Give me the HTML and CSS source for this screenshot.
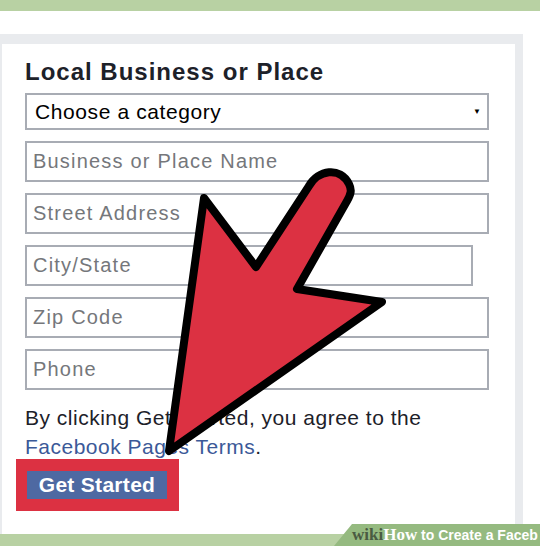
FILE: index.html
```html
<!DOCTYPE html>
<html>
<head>
<meta charset="utf-8">
<link rel="stylesheet" href="styles.css">
</head>
<body>
<div class="page">
  <div class="topbar"></div>
  <div class="spacer"></div>
  <div class="panel">
    <h1 class="title">Local Business or Place</h1>
    <div class="fields">
      <div class="select"><span>Choose a category</span><span class="caret">&#9660;</span></div>
      <div class="input">Business or Place Name</div>
      <div class="input">Street Address</div>
      <div class="input short">City/State</div>
      <div class="input">Zip Code</div>
      <div class="input">Phone</div>
    </div>
    <p class="terms">By clicking Get Started, you agree to the<br><a class="link">Facebook Pages Terms</a>.</p>
    <div class="highlight"><div class="button">Get Started</div></div>
  </div>
  <div class="footer"></div>
  <div class="banner"><span class="wiki">wiki</span><span class="how">How</span><span class="rest"> to Create a Faceb</span></div>
  <svg class="arrow" width="540" height="546" viewBox="0 0 540 546">
    <path d="M169,451 L204,198 L256,267 L309,186 C318,170 340,166 349,184 C352,190 351,194 347,201 L297,289 L382,302 Z" fill="#dc3142" stroke="#000" stroke-width="8" stroke-linejoin="round"/>
  </svg>
</div>
</body>
</html>
```

FILE: styles.css
```css
html, body {
  margin: 0;
  padding: 0;
  background: #fff;
}
.page {
  position: relative;
  width: 540px;
  height: 546px;
  overflow: hidden;
  font-family: "Liberation Sans", Arial, sans-serif;
}
.topbar {
  height: 11px;
  background: #b8d1a3;
}
.spacer {
  height: 23px;
}
.panel {
  width: 523px;
  height: 500px;
  border-top: 10px solid #e9ebee;
  border-left: 2px solid #e9ebee;
  border-right: 8px solid #e9ebee;
  background: #fff;
  padding: 14px 0 0 23px;
  box-sizing: border-box;
}
.title {
  margin: 0;
  font-size: 24px;
  line-height: 28px;
  font-weight: bold;
  color: #1d2129;
  letter-spacing: 1px;
}
.fields {
  margin-top: 7px;
  display: flex;
  flex-direction: column;
  gap: 11px;
  width: 464px;
}
.select, .input {
  box-sizing: border-box;
  border: 2px solid #a8acb4;
  display: flex;
  align-items: center;
  font-size: 20px;
  letter-spacing: 1.2px;
}
.select {
  height: 37px;
  padding: 0 6px 0 8px;
  color: #000;
  justify-content: space-between;
  font-size: 21px;
  letter-spacing: 0.6px;
}
.caret {
  font-size: 8px;
  letter-spacing: 0;
}
.input {
  height: 41px;
  padding-left: 6px;
  color: #75777b;
}
.input.short {
  width: 448px;
}
.terms {
  margin: 13px 0 0 0;
  font-size: 21px;
  line-height: 29px;
  color: #1d2129;
  letter-spacing: 0.5px;
}
.link {
  color: #3b5998;
}
.highlight {
  margin: -2px 0 0 -9px;
  width: 163px;
  height: 52px;
  background: #dc3142;
  display: flex;
  align-items: center;
  justify-content: center;
  box-sizing: border-box;
  padding-right: 1px;
}
.button {
  width: 140px;
  height: 28px;
  background: #4e69a2;
  color: #fff;
  font-weight: bold;
  font-size: 21px;
  line-height: 28px;
  text-align: center;
  letter-spacing: 0.3px;
}
.footer {
  height: 12px;
  background: #b8d1a3;
}
.banner {
  position: absolute;
  left: 334px;
  top: 524px;
  width: 206px;
  height: 22px;
  background: #95ba80;
  clip-path: polygon(18px 0, 100% 0, 100% 100%, 0 100%);
  white-space: nowrap;
  overflow: hidden;
  padding-left: 18px;
  box-sizing: border-box;
  line-height: 22px;
  font-weight: bold;
  color: #fff;
}
.wiki, .how {
  font-family: "Liberation Serif", "Times New Roman", serif;
  font-size: 17px;
}
.wiki {
  color: #4a5b42;
}
.rest {
  font-family: "Liberation Sans", Arial, sans-serif;
  font-size: 14px;
}
.arrow {
  position: absolute;
  left: 0;
  top: 0;
}
```
